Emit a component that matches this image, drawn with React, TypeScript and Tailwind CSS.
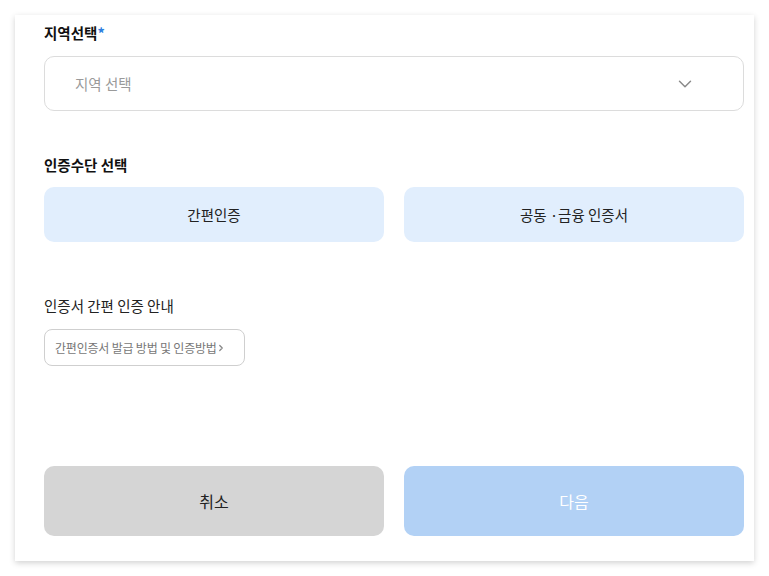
import { ChevronDown, ChevronRight } from "lucide-react";

const font = { fontFamily: '"Noto Sans CJK KR", "Noto Sans", sans-serif' };

export default function App() {
  return (
    <div className="min-h-[576px] w-[769px] bg-white pt-[15px]" style={font}>
      <div className="ml-[15px] w-[739px] h-[546px] bg-white shadow-[0_2px_6px_rgba(0,0,0,0.18)] pl-[29px] pr-[10px] pt-[8px] flex flex-col">
        {/* 지역 */}
        <div className="h-[20px] flex items-center text-[14.5px] font-bold text-[#111]">
          지역선택<span className="text-[#2d7fe0]">*</span>
        </div>
        <button className="mt-[13px] h-[55px] w-full rounded-[10px] border border-[#dcdcdc] bg-white flex items-center justify-between pl-[30px] pr-[47px]">
          <span className="text-[14.5px] text-[#9a9a9a]">지역 선택</span>
          <ChevronDown className="w-[22px] h-[22px] text-[#8a8a8a]" strokeWidth={1.6} />
        </button>

        {/* 인증수단 */}
        <div className="mt-[44px] h-[20px] flex items-center text-[14.5px] font-bold text-[#111]">
          인증수단 선택
        </div>
        <div className="mt-[12px] grid grid-cols-2 gap-[20px]">
          <button className="h-[55px] rounded-[10px] bg-[#e1eefd] text-[14.5px] text-[#222]">간편인증</button>
          <button className="h-[55px] rounded-[10px] bg-[#e1eefd] text-[14.5px] text-[#222]">공동 ·금융 인증서</button>
        </div>

        {/* 안내 */}
        <div className="mt-[54px] h-[20px] flex items-center text-[14.5px] text-[#222]">
          인증서 간편 인증 안내
        </div>
        <div className="mt-[13px]">
          <button className="h-[37px] w-[201px] rounded-[8px] border border-[#cfcfcf] bg-white flex items-center pl-[10px] text-[12px] tracking-[-0.2px] text-[#777]">
            간편인증서 발급 방법 및 인증방법
            <ChevronRight className="w-[10px] h-[10px] text-[#888] -ml-[1px]" strokeWidth={3} />
          </button>
        </div>

        {/* 하단 버튼 */}
        <div className="mt-[100px] grid grid-cols-2 gap-[20px]">
          <button className="h-[70px] rounded-[10px] bg-[#d5d5d5] text-[16px] text-[#222]">취소</button>
          <button className="h-[70px] rounded-[10px] bg-[#b2d1f5] text-[16px] text-white">다음</button>
        </div>
      </div>
    </div>
  );
}
